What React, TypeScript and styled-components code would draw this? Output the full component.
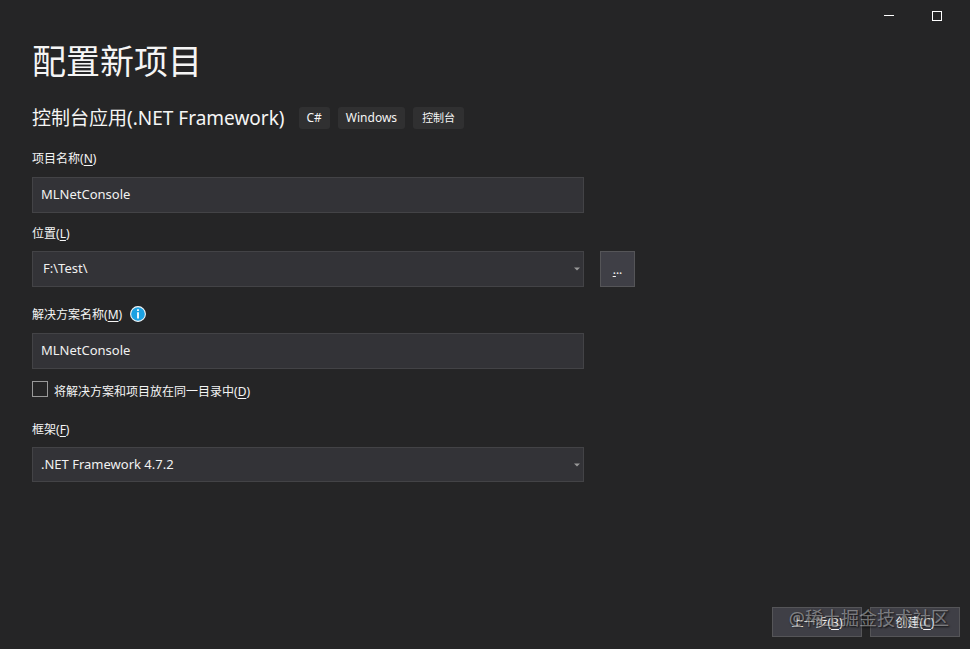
import React from "react";
import styled, { createGlobalStyle } from "styled-components";

const GlobalStyle = createGlobalStyle`
  *, *::before, *::after { box-sizing: border-box; }
  body {
    margin: 0;
    background: #252526;
    color: #f5f5f5;
    font-family: "Noto Sans", "Noto Sans CJK SC", sans-serif;
    font-size: 12px;
  }
  button, input, select { font: inherit; color: inherit; }
  h1, h2, ul { margin: 0; padding: 0; font-weight: 400; }
`;

const Window = styled.div`
  display: flex;
  flex-direction: column;
  min-height: 100vh;
`;

const TitleBar = styled.header`
  display: flex;
  justify-content: flex-end;
  gap: 16px;
  height: 32px;
  padding-right: 17px;
`;

const CaptionButton = styled.button`
  display: grid;
  place-items: center;
  width: 32px;
  padding: 0;
  border: 0;
  background: none;
`;

const Content = styled.main`
  flex: 1;
  padding: 5px 32px 0;
`;

const Title = styled.h1`
  font-size: 34px;
  line-height: 48px;
`;

const Template = styled.section`
  display: flex;
  align-items: center;
  gap: 14px;
  height: 22px;
  margin: 22px 0 20px;
`;

const TemplateName = styled.h2`
  font-size: 19px;
  line-height: 22px;
  white-space: nowrap;
`;

const Tags = styled.ul`
  display: flex;
  gap: 8px;
  list-style: none;
`;

const Tag = styled.li<{ $compact?: boolean }>`
  padding: 0 ${(p) => (p.$compact ? 9 : 8)}px;
  border-radius: 3px;
  background: #303031;
  font-size: ${(p) => (p.$compact ? 11 : 12)}px;
  line-height: 22px;
  white-space: nowrap;
`;

const Form = styled.form`
  display: flex;
  flex-direction: column;
`;

const Field = styled.div<{ $gap?: number; $space?: number }>`
  display: flex;
  flex-direction: column;
  gap: ${(p) => p.$gap ?? 8}px;
  margin-bottom: ${(p) => p.$space ?? 0}px;
`;

const LabelRow = styled.div`
  display: flex;
  align-items: center;
  gap: 8px;
  height: 20px;
  > svg { margin-bottom: 2px; }
`;

const Label = styled.label`
  line-height: 20px;
`;

const Key = styled.span`
  text-decoration: underline;
  text-underline-offset: 2px;
`;

const ControlRow = styled.div`
  display: flex;
  gap: 16px;
`;

const control = `
  width: 100%;
  height: 36px;
  border: 1px solid #434346;
  border-radius: 0;
  background: #333337;
  color: #f1f1f1;
  font-size: 13px;
  outline: none;
`;

const TextInput = styled.input`
  ${control}
  max-width: 552px;
  padding: 0 8px 2px;
`;

const SelectBox = styled.div`
  display: grid;
  align-items: center;
  width: 100%;
  max-width: 552px;
  > * { grid-area: 1 / 1; }
  > svg { justify-self: end; margin-right: 4px; pointer-events: none; }
`;

const Select = styled.select<{ $inset: number; $height?: number }>`
  ${control}
  height: ${(p) => p.$height ?? 36}px;
  appearance: none;
  padding: 0 20px 2px ${(p) => p.$inset}px;
`;

const Button = styled.button<{ $width: number; $height: number }>`
  flex: none;
  width: ${(p) => p.$width}px;
  height: ${(p) => p.$height}px;
  padding: 0;
  border: 1px solid #555558;
  background: #3f3f46;
`;

const CheckRow = styled.div`
  display: flex;
  gap: 6px;
  height: 20px;
  margin: 12px 0 19px;
`;

const CheckBox = styled.input`
  appearance: none;
  width: 16px;
  height: 16px;
  margin: 0;
  border: 1px solid #999999;
  background: #252526;
`;

const CheckLabel = styled(Label)`
  padding-top: 1px;
`;

const Footer = styled.footer`
  position: relative;
  display: flex;
  justify-content: flex-end;
  gap: 8px;
  padding: 0 10px 12px;
`;

const Watermark = styled.span`
  position: absolute;
  right: 21px;
  bottom: 18px;
  color: rgba(255, 255, 255, 0.4);
  font-size: 18px;
  line-height: 26px;
  text-shadow: 1px 1px 2px rgba(0, 0, 0, 0.8);
  pointer-events: none;
`;

const Arrow = () => (
  <svg width="6" height="4" viewBox="0 0 6 4" aria-hidden="true">
    <path d="M0 0.5h6L3 3.5z" fill="#999999" />
  </svg>
);

const InfoIcon = () => (
  <svg width="16" height="16" viewBox="0 0 16 16" role="img" aria-label="信息">
    <circle cx="8" cy="8" r="7.4" fill="#1ba1e2" stroke="#f5f5f5" strokeWidth="1.1" />
    <path d="M7.1 3.2h1.8V5H7.1zM7.1 6.2h1.8v6.4H7.1z" fill="#fff" />
  </svg>
);

const Access = ({ text, k }: { text: string; k: string }) => (
  <>
    {text}(<Key>{k}</Key>)
  </>
);

export default function App() {
  return (
    <>
      <GlobalStyle />
      <Window>
        <TitleBar>
          <CaptionButton aria-label="最小化">
            <svg width="10" height="10" viewBox="0 0 10 10">
              <path d="M0 4.5h10" stroke="#fff" />
            </svg>
          </CaptionButton>
          <CaptionButton aria-label="最大化">
            <svg width="10" height="10" viewBox="0 0 10 10">
              <rect x="0.5" y="0.5" width="9" height="9" fill="none" stroke="#fff" />
            </svg>
          </CaptionButton>
        </TitleBar>
        <Content>
          <Title>配置新项目</Title>
          <Template>
            <TemplateName>控制台应用(.NET Framework)</TemplateName>
            <Tags>
              <Tag>C#</Tag>
              <Tag>Windows</Tag>
              <Tag $compact>控制台</Tag>
            </Tags>
          </Template>
          <Form onSubmit={(e) => e.preventDefault()}>
            <Field $space={11}>
              <Label htmlFor="name"><Access text="项目名称" k="N" /></Label>
              <TextInput id="name" defaultValue="MLNetConsole" />
            </Field>
            <Field $gap={7} $space={18}>
              <Label htmlFor="location"><Access text="位置" k="L" /></Label>
              <ControlRow>
                <SelectBox>
                  <Select id="location" $inset={10}>
                    <option>F:\Test\</option>
                  </Select>
                  <Arrow />
                </SelectBox>
                <Button type="button" $width={35} $height={36} aria-label="浏览">
                  <Key>.</Key>..
                </Button>
              </ControlRow>
            </Field>
            <Field>
              <LabelRow>
                <Label htmlFor="solution"><Access text="解决方案名称" k="M" /></Label>
                <InfoIcon />
              </LabelRow>
              <TextInput id="solution" defaultValue="MLNetConsole" />
            </Field>
            <CheckRow>
              <CheckBox type="checkbox" id="same" />
              <CheckLabel htmlFor="same"><Access text="将解决方案和项目放在同一目录中" k="D" /></CheckLabel>
            </CheckRow>
            <Field $gap={7}>
              <Label htmlFor="framework"><Access text="框架" k="F" /></Label>
              <SelectBox>
                <Select id="framework" $inset={8} $height={35}>
                  <option>.NET Framework 4.7.2</option>
                </Select>
                <Arrow />
              </SelectBox>
            </Field>
          </Form>
        </Content>
        <Footer>
          <Button type="button" $width={90} $height={30}><Access text="上一步" k="B" /></Button>
          <Button type="button" $width={90} $height={30}><Access text="创建" k="C" /></Button>
          <Watermark>@稀土掘金技术社区</Watermark>
        </Footer>
      </Window>
    </>
  );
}
